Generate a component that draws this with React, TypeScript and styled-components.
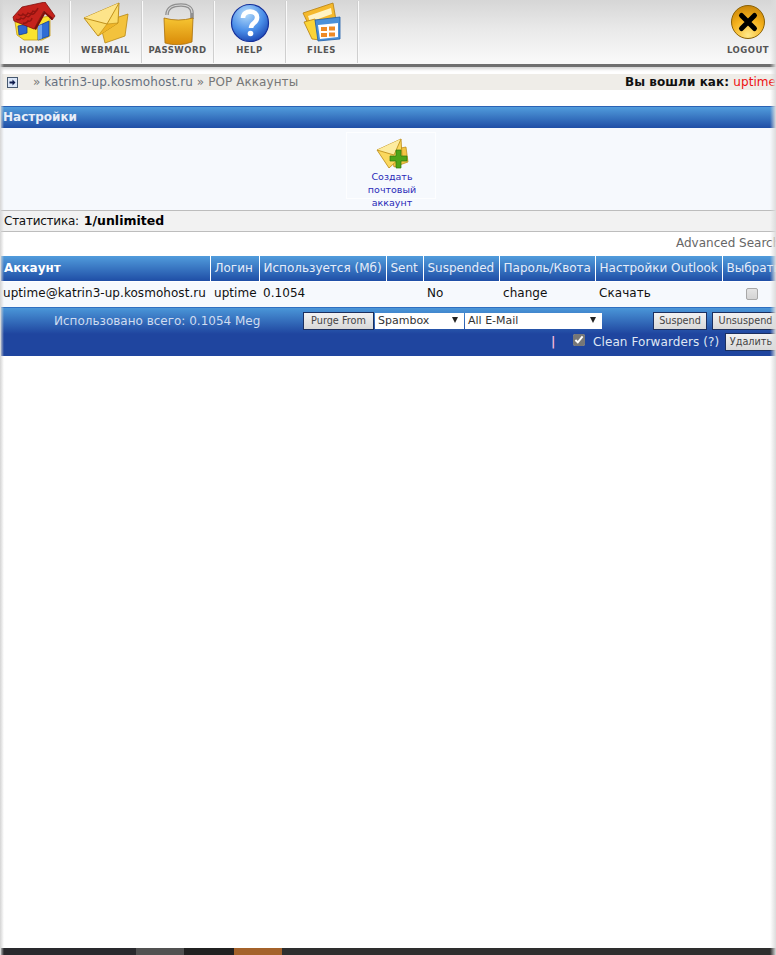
import styled, { createGlobalStyle } from "styled-components";

const GlobalStyle = createGlobalStyle`
  html, body {
    margin: 0;
    padding: 0;
    background: #fff;
  }
  body {
    font-family: "DejaVu Sans", Verdana, sans-serif;
    font-size: 12px;
    color: #111;
  }
  * {
    box-sizing: border-box;
  }
`;

const HomeIcon = () => (
  <svg width="46" height="42" viewBox="0 0 46 42">
    <path d="M3 20 L38 14 V34 L30 38 L12 38 L5 33Z" fill="#fbe32f" stroke="#c79a12" strokeWidth="0.8" />
    <path d="M6 24 L15 22 V31 L7 33Z" fill="#2f66cf" stroke="#173f92" strokeWidth="0.8" />
    <path d="M26 24 L37 19 V34 L26 38Z" fill="#2f6dd4" stroke="#173f92" strokeWidth="0.8" />
    <path d="M26 24 L30 22.500 V36.500 L26 38Z" fill="#6fa3ee" />
    <path d="M1 15 L10 5 L33 0 L43 14 L40 18 L32 9 L22 27 L2 19Z" fill="#c5221c" stroke="#7f0f0c" strokeWidth="0.8" />
    <path d="M32 9 L22 27 L24 28 L33 12 L40 18 L41 16Z" fill="#7d0e0c" />
    <path d="M6 12 q3 3 5 0 q3 3 5 -1 q3 2 5 -2 q3 2 5 -3 M4 17 q3 2 5 -1 q3 2 5 -2 q3 2 5 -2 q3 1 5 -3 M11 21 q3 1 5 -2 q3 1 4 -3" fill="none" stroke="#921410" strokeWidth="1.5" />
  </svg>
);

const MailIcon = () => (
  <svg width="46" height="42" viewBox="0 0 46 42">
    <path d="M17 21 L45 12 L42 34 L22 41Z" fill="#f3c23c" stroke="#b98812" strokeWidth="0.8" />
    <path d="M1 16 L36 1 L35 21 L15 34Z" fill="#fbdc6a" stroke="#b98812" strokeWidth="0.9" />
    <path d="M1 16 L24 22 L36 1" fill="#fde48a" stroke="#b98812" strokeWidth="0.9" />
    <path d="M15 34 L24 22 L35 21" fill="#efb528" stroke="#b98812" strokeWidth="0.6" />
  </svg>
);

const LockIcon = () => (
  <svg width="34" height="44" viewBox="0 0 34 44">
    <defs>
      <linearGradient id="lockBody" x1="0" x2="0" y1="0" y2="1">
        <stop offset="0" stopColor="#f6c532" />
        <stop offset="1" stopColor="#d98a08" />
      </linearGradient>
    </defs>
    <path d="M6 14 C6 6 13 4 20 4 C27 4 31 7 31 12 V18" fill="none" stroke="#8f8f8f" strokeWidth="3.6" />
    <path d="M6 14 C6 6 13 4 20 4 C27 4 31 7 31 12" fill="none" stroke="#d8d8d8" strokeWidth="1.1" />
    <path d="M3 17 Q17 21 32 17 L31 41 Q17 46 4 42Z" fill="url(#lockBody)" stroke="#a8700c" strokeWidth="0.8" />
  </svg>
);

const HelpIcon = () => (
  <svg width="40" height="40" viewBox="0 0 40 40">
    <defs>
      <radialGradient id="helpBall" cx="0.4" cy="0.25" r="0.85">
        <stop offset="0" stopColor="#b5dcfb" />
        <stop offset="0.55" stopColor="#4a8ee8" />
        <stop offset="1" stopColor="#1238a8" />
      </radialGradient>
    </defs>
    <circle cx="20" cy="20" r="18.5" fill="url(#helpBall)" stroke="#15309a" strokeWidth="1.2" />
    <path d="M13 15 C13 6 28 7 27 15 C27 20 21 20 21 25" fill="none" stroke="#fff" strokeWidth="4.6" />
    <circle cx="20.5" cy="30.5" r="2.8" fill="#fff" />
  </svg>
);

const FilesIcon = () => (
  <svg width="42" height="42" viewBox="0 0 42 42">
    <path d="M2 11 L32 1 L35 18 L10 28Z" fill="#f5b92c" stroke="#b57f10" strokeWidth="0.8" />
    <path d="M7 14 L30 6 L31 12 L9 20Z" fill="#fff3c4" />
    <path d="M3 20 L14 17 L19 38 L11 37Z" fill="#fbd437" stroke="#b57f10" strokeWidth="0.8" />
    <path d="M14 18 L39 15 L39 37 L17 39Z" fill="#4a90d9" stroke="#1f5ea8" strokeWidth="0.8" />
    <path d="M17 23 L37 21 V35 L19 37Z" fill="#fff" />
    <path d="M20 25 h6 v4 h-6Z M28 24.500 h6 v4 h-6Z M20 31 h6 v4 h-6Z M28 30.500 h6 v4 h-6Z" fill="#ee8a26" />
  </svg>
);

const LogoutIcon = () => (
  <svg width="36" height="36" viewBox="0 0 36 36">
    <defs>
      <radialGradient id="logoutBall" cx="0.5" cy="0.9" r="0.9">
        <stop offset="0" stopColor="#ffe98a" />
        <stop offset="0.55" stopColor="#f6b21c" />
        <stop offset="1" stopColor="#c98508" />
      </radialGradient>
    </defs>
    <circle cx="18" cy="18" r="16.500" fill="url(#logoutBall)" stroke="#8a6208" strokeWidth="1" />
    <path d="M11.500 11.500 L24.500 24.500 M24.500 11.500 L11.500 24.500" stroke="#000" strokeWidth="5" strokeLinecap="round" />
  </svg>
);

const NewMailIcon = () => (
  <svg width="33" height="32" viewBox="0 0 33 32">
    <path d="M14 12 L30 9 L32 24 L18 29Z" fill="#f3c544" stroke="#b98812" strokeWidth="0.7" />
    <path d="M1 12 L25 1 L26 18 L13 30Z" fill="#fbd85e" stroke="#b98812" strokeWidth="0.8" />
    <path d="M1 12 L18 17 L25 1" fill="#fdeca0" stroke="#b98812" strokeWidth="0.8" />
    <path d="M20 12 h5 v6 h6 v5 h-6 v7 h-5 v-7 h-6 v-5 h6Z" fill="#4fa51a" stroke="#2f7a0d" strokeWidth="0.7" />
  </svg>
);

const ExpandIcon = () => (
  <svg width="11" height="11" viewBox="0 0 11 11">
    <rect x="0.5" y="0.5" width="10" height="10" fill="#dbe6f7" stroke="#46586f" />
    <path d="M2.500 4.500 h3 v-2 l3 3 -3 3 v-2 h-3Z" fill="#0d1b4c" />
  </svg>
);

const navItems = [
  { label: "HOME", icon: <HomeIcon /> },
  { label: "WEBMAIL", icon: <MailIcon /> },
  { label: "PASSWORD", icon: <LockIcon /> },
  { label: "HELP", icon: <HelpIcon /> },
  { label: "FILES", icon: <FilesIcon /> },
];

const columns = [
  { title: "Аккаунт", width: 209, strong: true },
  { title: "Логин", width: 49 },
  { title: "Используется (Мб)", width: 127 },
  { title: "Sent", width: 37 },
  { title: "Suspended", width: 76 },
  { title: "Пароль/Квота", width: 96 },
  { title: "Настройки Outlook", width: 127 },
  { title: "Выбрать", width: 60 },
];

const App = () => {
  return (
    <Page>
      <GlobalStyle />
      <TopNav>
        <NavGroup>
          {navItems.map((item) => (
            <NavItem key={item.label}>
              <NavIcon>{item.icon}</NavIcon>
              <NavLabel>{item.label}</NavLabel>
            </NavItem>
          ))}
        </NavGroup>
        <LogoutItem>
          <LogoutIconWrap>
            <LogoutIcon />
          </LogoutIconWrap>
          <NavLabel>LOGOUT</NavLabel>
        </LogoutItem>
      </TopNav>

      <Breadcrumb>
        <ExpandIcon />
        <Crumbs>
          » <CrumbLink>katrin3-up.kosmohost.ru</CrumbLink> » POP Аккаунты
        </Crumbs>
        <LoggedIn>
          Вы вошли как: <UserName>uptime</UserName>
        </LoggedIn>
      </Breadcrumb>

      <SectionHead>Настройки</SectionHead>
      <SettingsPanel>
        <Tile>
          <TileIcon>
            <NewMailIcon />
          </TileIcon>
          <TileText>Создать почтовый аккаунт</TileText>
        </Tile>
      </SettingsPanel>

      <StatsBar>
        <StatsLabel>Статистика:</StatsLabel>
        <strong>1/unlimited</strong>
      </StatsBar>
      <SearchRow>Advanced Search</SearchRow>

      <AccountTable>
        <colgroup>
          {columns.map((col) => (
            <col key={col.title} width={col.width} />
          ))}
        </colgroup>
        <thead>
          <tr>
            {columns.map((col) => (
              <HeadCell key={col.title} $strong={col.strong}>
                {col.title}
              </HeadCell>
            ))}
          </tr>
        </thead>
        <tbody>
          <tr>
            <BodyCell>uptime@katrin3-up.kosmohost.ru</BodyCell>
            <BodyCell>uptime</BodyCell>
            <BodyCell>0.1054</BodyCell>
            <BodyCell />
            <BodyCell>No</BodyCell>
            <BodyCell>change</BodyCell>
            <BodyCell>Скачать</BodyCell>
            <CheckCell>
              <RowCheck type="checkbox" readOnly />
            </CheckCell>
          </tr>
        </tbody>
      </AccountTable>

      <ActionBar>
        <ActionRow>
          <UsedTotal>Использовано всего: 0.1054 Meg</UsedTotal>
          <ActionButton $width={71}>Purge From</ActionButton>
          <SelectBox $width={89}>Spambox</SelectBox>
          <SelectBox $width={137}>All E-Mail</SelectBox>
          <SuspendButton $width={54}>Suspend</SuspendButton>
          <ActionButton $width={67}>Unsuspend</ActionButton>
        </ActionRow>
        <CleanRow>
          <PipeMark>|</PipeMark>
          <CleanCheck type="checkbox" checked readOnly />
          <CleanLabel>Clean Forwarders (?)</CleanLabel>
          <ActionButton $width={52}>Удалить</ActionButton>
        </CleanRow>
      </ActionBar>

      <Spacer />

      <BottomStrip>
        <StripPart $width={135} $color="#29292d" />
        <StripPart $width={48} $color="#515151" />
        <StripPart $width={50} $color="#212121" />
        <StripPart $width={48} $color="#a4622a" />
        <StripPart $width={494} $color="#2e2e2e" />
      </BottomStrip>
    </Page>
  );
};

export default App;

const Page = styled.div`
  position: relative;
  width: 776px;
  height: 955px;
  overflow: hidden;
  display: flex;
  flex-direction: column;
  background: #fff;

  &:before {
    content: "";
    position: absolute;
    z-index: 2;
    left: 0;
    top: 0;
    bottom: 0;
    width: 4px;
    background: linear-gradient(to right, #d4d4d4, rgba(255, 255, 255, 0));
    pointer-events: none;
  }

  &:after {
    content: "";
    position: absolute;
    z-index: 2;
    right: 0;
    top: 0;
    bottom: 0;
    width: 6px;
    background: linear-gradient(to left, #dcdcdc, rgba(255, 255, 255, 0));
    pointer-events: none;
  }
`;

const TopNav = styled.div`
  flex: none;
  display: flex;
  justify-content: space-between;
  height: 67px;
  padding-top: 1px;
  background: linear-gradient(#d6d6d6, #e9e9e9 45%, #f8f8f8 93%);
  border-bottom: 3px solid #6f6f6f;
  box-shadow: 0 2px 3px rgba(0, 0, 0, 0.18);
`;

const NavGroup = styled.div`
  display: flex;
`;

const NavItem = styled.div`
  width: 72px;
  height: 62px;
  display: flex;
  flex-direction: column;
  align-items: center;
  border-right: 1px solid #cfcfcf;
  box-shadow: 1px 0 0 #fafafa;

  &:first-child {
    width: 70px;
  }
`;

const NavIcon = styled.div`
  height: 44px;
  display: flex;
  align-items: center;
  justify-content: center;
`;

const NavLabel = styled.div`
  font-family: "DejaVu Sans", sans-serif;
  font-size: 8.5px;
  font-weight: bold;
  letter-spacing: 0.5px;
  color: #555;
  white-space: nowrap;
`;

const LogoutItem = styled.div`
  width: 56px;
  display: flex;
  flex-direction: column;
  align-items: center;
`;

const LogoutIconWrap = styled.div`
  height: 44px;
  padding-top: 3px;
`;

const Breadcrumb = styled.div`
  flex: none;
  margin: 7px 0 16px 2px;
  height: 16px;
  background: #efede8;
  display: flex;
  align-items: center;
  padding-left: 5px;
  white-space: nowrap;
`;

const Crumbs = styled.div`
  margin-left: 15px;
  color: #777;
  font-size: 12px;
  letter-spacing: 0.07px;
`;

const CrumbLink = styled.span`
  color: #66707f;
`;

const LoggedIn = styled.div`
  margin-left: auto;
  flex: none;
  font-weight: bold;
  color: #111;
  font-size: 12px;
  letter-spacing: 0.06px;
`;

const UserName = styled.span`
  font-weight: normal;
  color: #ee1111;
`;

const SectionHead = styled.div`
  flex: none;
  height: 22px;
  margin-left: 1px;
  padding-left: 2px;
  border-top: 1px solid #2a62b4;
  background: linear-gradient(#519cdc, #1f4ea6);
  color: #e8eef8;
  font-weight: bold;
  font-size: 12px;
  line-height: 20px;
`;

const SettingsPanel = styled.div`
  flex: none;
  height: 82px;
  margin-left: 1px;
  padding-top: 4px;
  padding-left: 345px;
  background: #f6f9fd;
`;

const Tile = styled.div`
  width: 90px;
  height: 67px;
  border: 1px solid #fdfeff;
  display: flex;
  flex-direction: column;
  align-items: center;
  padding: 5px 0 0 2px;
`;

const TileIcon = styled.div`
  flex: none;
  height: 32px;
`;

const TileText = styled.div`
  flex: none;
  width: 62px;
  text-align: center;
  font-size: 9.5px;
  line-height: 13px;
  color: #2a2ab8;
`;

const StatsBar = styled.div`
  flex: none;
  height: 22px;
  margin-left: 1px;
  padding-left: 3px;
  border-top: 1px solid #bdbdbd;
  border-bottom: 1px solid #bdbdbd;
  background: #f2f2f2;
  line-height: 19px;
  font-size: 12px;
  white-space: nowrap;

  strong {
    color: #000;
    font-size: 12.5px;
  }
`;

const StatsLabel = styled.span`
  display: inline-block;
  margin-right: 5px;
  letter-spacing: -0.25px;
`;

const SearchRow = styled.div`
  flex: none;
  height: 24px;
  white-space: nowrap;
  color: #666;
  font-size: 12px;
  line-height: 23px;
  padding-left: 676px;
`;

const AccountTable = styled.table`
  flex: none;
  width: 781px;
  margin-left: 1px;
  table-layout: fixed;
  border-collapse: collapse;
`;

const HeadCell = styled.th<{ $strong?: boolean }>`
  height: 25px;
  padding: 0 0 0 4px;
  border-right: 1px solid #fff;
  border-bottom: 1px solid #fff;
  background: linear-gradient(#519cdc, #1f4ea6);
  color: ${(props) => (props.$strong ? "#fff" : "#e6edf8")};
  font-size: 12px;
  font-weight: ${(props) => (props.$strong ? "bold" : "normal")};
  text-align: left;
  white-space: nowrap;
  overflow: hidden;

  &:first-child {
    padding-left: 3px;
  }
`;

const BodyCell = styled.td`
  height: 26px;
  padding: 0 0 2px 4px;
  background: #f6f9fd;
  font-size: 12px;
  color: #111;
  white-space: nowrap;
  overflow: hidden;
  letter-spacing: 0.05px;

  &:first-child {
    padding-left: 2px;
  }
`;

const CheckCell = styled(BodyCell)`
  padding-left: 24px;
`;

const RowCheck = styled.input`
  appearance: none;
  display: block;
  margin: 2px 0 0 0;
  width: 12px;
  height: 12px;
  border: 1px solid #a8a8a8;
  border-radius: 2px;
  background: linear-gradient(#e4e4e4, #d4d4d4);
`;

const ActionBar = styled.div`
  flex: none;
  height: 49px;
  margin-left: 1px;
  padding-top: 4px;
  background: linear-gradient(#4a96d8, #1f459f 26px);
  border-top: 1px solid #2e6fc0;
  white-space: nowrap;
`;

const ActionRow = styled.div`
  display: flex;
  align-items: center;
  height: 18px;
  padding-left: 53px;
`;

const UsedTotal = styled.div`
  flex: none;
  width: 249px;
  color: #cfdcf0;
  font-size: 12px;
`;

const ActionButton = styled.div<{ $width: number }>`
  flex: none;
  width: ${(props) => props.$width}px;
  height: 18px;
  margin-right: 1px;
  border: 1px solid #1b2f5f;
  background: linear-gradient(#f2f2f2, #d8d8d8);
  color: #444;
  font-size: 9.7px;
  line-height: 16px;
  text-align: center;
`;

const SuspendButton = styled(ActionButton)`
  margin-left: 50px;
  margin-right: 5px;
`;

const SelectBox = styled.div<{ $width: number }>`
  position: relative;
  flex: none;
  width: ${(props) => props.$width}px;
  height: 16px;
  margin-right: 1px;
  padding-left: 3px;
  background: #fff;
  color: #333;
  font-size: 11px;
  line-height: 16px;

  &:after {
    content: "";
    position: absolute;
    right: 6px;
    top: 4px;
    border-left: 3.5px solid transparent;
    border-right: 3.5px solid transparent;
    border-top: 6px solid #222;
  }
`;

const CleanRow = styled.div`
  display: flex;
  align-items: center;
  height: 20px;
  margin-top: 2px;
  padding-left: 550px;
`;

const PipeMark = styled.div`
  flex: none;
  width: 22px;
  color: #f4bcd8;
  font-size: 12px;
  font-weight: bold;
`;

const CleanCheck = styled.input`
  flex: none;
  margin: 0 8px 5px 0;
  width: 12px;
  height: 12px;
  accent-color: #777;
`;

const CleanLabel = styled.div`
  flex: none;
  width: 132px;
  color: #dfe7f4;
  font-size: 12px;
  letter-spacing: 0.1px;
`;

const Spacer = styled.div`
  flex: 1;
`;

const BottomStrip = styled.div`
  flex: none;
  display: flex;
  height: 7px;
  margin-left: 1px;
`;

const StripPart = styled.div<{ $width: number; $color: string }>`
  width: ${(props) => props.$width}px;
  background: ${(props) => props.$color};
`;
